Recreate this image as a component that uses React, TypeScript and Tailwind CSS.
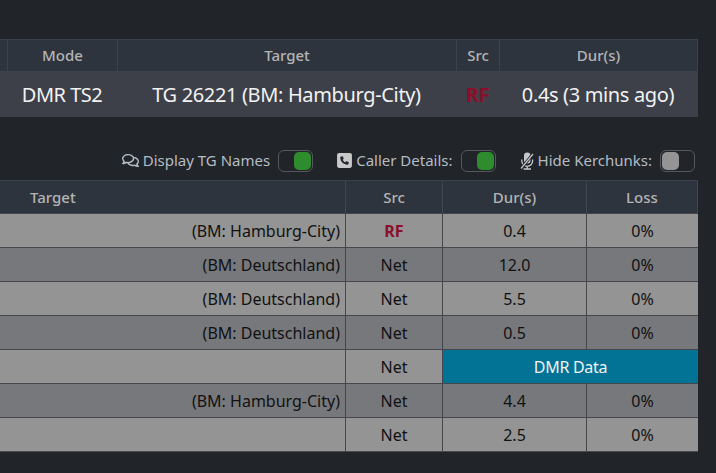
import { FaRegComments } from "react-icons/fa";
import { FaSquarePhone } from "react-icons/fa6";

const rows = [
  { target: "(BM: Hamburg-City)", src: "RF", dur: "0.4", loss: "0%" },
  { target: "(BM: Deutschland)", src: "Net", dur: "12.0", loss: "0%" },
  { target: "(BM: Deutschland)", src: "Net", dur: "5.5", loss: "0%" },
  { target: "(BM: Deutschland)", src: "Net", dur: "0.5", loss: "0%" },
  { target: "", src: "Net", dur: "", loss: "" },
  { target: "(BM: Hamburg-City)", src: "Net", dur: "4.4", loss: "0%" },
  { target: "", src: "Net", dur: "2.5", loss: "0%" },
];

function Toggle({ on }: { on: boolean }) {
  return (
    <div className={`flex h-[22px] w-[35px] rounded-[6px] border border-[#55585c] p-[1px] ${on ? "justify-end" : "justify-start"}`}>
      <div className={`h-[18px] w-[17px] rounded-[5px] ${on ? "bg-[#2e8b2e]" : "bg-[#949494]"}`} />
    </div>
  );
}

function MicOff() {
  return (
    <svg viewBox="0 0 14 18" className="mr-[4px] h-[18px] w-[14px] text-[#c4c8cc]" fill="none" stroke="currentColor">
      <rect x="4" y="0.5" width="6.5" height="11" rx="3.2" fill="currentColor" stroke="none" />
      <path d="M1.8 7.5v1.5a5.4 5.4 0 0 0 10.8 0V7.5" strokeWidth="1.3" />
      <path d="M7.2 14.5v2M3.5 17h7.5" strokeWidth="1.3" />
      <path d="M0.2 17.5 13.8 1" stroke="#212429" strokeWidth="3" />
      <path d="M1 16.5 13 2" strokeWidth="1.2" />
    </svg>
  );
}

function App() {
  return (
    <div className="h-[473px] w-[716px] overflow-hidden bg-[#212429] pt-[39px] font-['Noto_Sans',sans-serif]">
      <div className="grid w-[698px] grid-cols-[8px_110px_339px_43px_198px] grid-rows-[33px_45px]">
        <div className="border-y border-r border-[#3a424d] bg-[#2d343e]" />
        <HeadTop>Mode</HeadTop>
        <HeadTop>Target</HeadTop>
        <HeadTop>Src</HeadTop>
        <HeadTop>Dur(s)</HeadTop>
        <div className="bg-[#3d4048]" />
        <LiveCell><span className="tracking-[-0.5px]">DMR TS2</span></LiveCell>
        <LiveCell>TG 26221 (BM: Hamburg-City)</LiveCell>
        <LiveCell><span className="font-bold text-[#8b0f2b]">RF</span></LiveCell>
        <LiveCell>0.4s (3 mins ago)</LiveCell>
      </div>

      <div className="mt-[32px] flex h-[23px] w-[695px] items-center justify-end text-[15px] text-[#b4bcc4]">
        <FaRegComments className="mr-[4px] text-[17px]" />
        <span>Display TG Names</span>
        <div className="ml-[8px]"><Toggle on /></div>
        <FaSquarePhone className="ml-[23px] mr-[3px] text-[17px] text-[#c9c9c9]" />
        <span>Caller Details:</span>
        <div className="ml-[8px]"><Toggle on /></div>
        <div className="ml-[24px]"><MicOff /></div>
        <span>Hide Kerchunks:</span>
        <div className="ml-[8px]"><Toggle on={false} /></div>
      </div>

      <div className="mt-[8px] grid w-[698px] grid-cols-[346px_97px_144px_111px] border-y border-r border-[#3a424d] border-b-[#4a4c52] text-[16px]">
        <div className="flex h-[32px] items-center border-r border-[#3f4650] bg-[#2d343e] pl-[30px] text-[15px] font-medium text-[#b4b4b4]">Target</div>
        <HeadBottom>Src</HeadBottom>
        <HeadBottom>Dur(s)</HeadBottom>
        <HeadBottom>Loss</HeadBottom>
        {rows.map((row, i) => {
          const bg = i % 2 === 0 ? "bg-[#949494]" : "bg-[#77787c]";
          return (
            <div key={i} className="contents text-[#111]">
              <div className={`flex h-[34px] items-center justify-end border-t border-r border-[#45474d] pr-[5px] ${bg}`}>{row.target}</div>
              <div className={`flex h-[34px] items-center justify-center border-t border-r border-[#45474d] ${bg} ${row.src === "RF" ? "font-bold text-[#8b0f2b]" : ""}`}>{row.src}</div>
              {row.dur === "" ? (
                <div className="col-span-2 flex h-[34px] items-center justify-center border-t border-[#45474d] bg-[#027395] tracking-[-0.3px] text-[#f2f2f2]">DMR Data</div>
              ) : (
                <>
                  <div className={`flex h-[34px] items-center justify-center border-t border-r border-[#45474d] ${bg}`}>{row.dur}</div>
                  <div className={`flex h-[34px] items-center justify-center border-t border-[#45474d] ${bg}`}>{row.loss}</div>
                </>
              )}
            </div>
          );
        })}
      </div>
    </div>
  );
}

function HeadTop({ children }: { children: React.ReactNode }) {
  return <div className="flex items-center justify-center border-y border-r border-[#3a424d] bg-[#2d343e] text-[15px] font-medium text-[#b4b4b4]">{children}</div>;
}

function LiveCell({ children }: { children: React.ReactNode }) {
  return <div className="flex items-center justify-center bg-[#3d4048] pr-[2px] text-[20px] tracking-[-0.35px] text-[#f2f2f2]">{children}</div>;
}

function HeadBottom({ children }: { children: React.ReactNode }) {
  return <div className="flex h-[32px] items-center justify-center border-r border-[#3f4650] bg-[#2d343e] text-[15px] font-medium text-[#b4b4b4] last:border-r-0">{children}</div>;
}

export default App;
